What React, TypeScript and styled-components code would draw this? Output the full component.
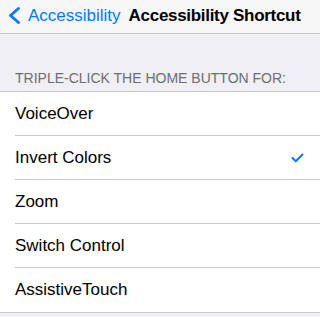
import React from 'react';
import styled, { createGlobalStyle } from 'styled-components';

const GlobalStyle = createGlobalStyle`
  html, body {
    margin: 0;
    padding: 0;
    background: #efeff4;
  }
  body {
    font-family: "Liberation Sans", Arial, sans-serif;
    -webkit-font-smoothing: antialiased;
  }
`;

const Screen = styled.div`
  width: 320px;
  height: 317px;
  overflow: hidden;
  background: #efeff4;
`;

const NavBar = styled.div`
  height: 34px;
  display: flex;
  align-items: center;
  background: #f7f7f8;
  border-bottom: 1px solid #c8c7cc;
  box-sizing: border-box;
  padding: 0 0 2px 8px;
`;

const BackButton = styled.div`
  display: flex;
  align-items: center;
  gap: 7px;
  color: #007aff;
  font-size: 17px;
`;

const Title = styled.div`
  margin-left: 8px;
  font-size: 17px;
  font-weight: bold;
  letter-spacing: -0.3px;
  color: #000;
`;

const SectionHeader = styled.div`
  padding: 36px 15px 0;
  height: 57px;
  box-sizing: border-box;
  font-size: 14px;
  color: #6d6d72;
`;

const List = styled.div`
  background: #fff;
  border-top: 1px solid #c8c7cc;
  border-bottom: 1px solid #c8c7cc;
`;

const Row = styled.div<{ $last?: boolean }>`
  height: 44px;
  margin-left: 15px;
  padding-right: 16px;
  display: flex;
  align-items: center;
  justify-content: space-between;
  box-sizing: border-box;
  border-bottom: ${p => (p.$last ? 'none' : '1px solid #c8c7cc')};
  font-size: 17px;
  color: #000;
`;

const Chevron = () => (
  <svg width="13" height="17" viewBox="0 0 13 17">
    <path d="M10.5 1.5 L2.5 8.5 L10.5 15.5" fill="none" stroke="#007aff" strokeWidth="2.8" strokeLinecap="round" strokeLinejoin="round" />
  </svg>
);

const Check = () => (
  <svg width="13" height="10" viewBox="0 0 13 10">
    <path d="M1.5 5 L4.8 8.2 L11.5 1.5" fill="none" stroke="#007aff" strokeWidth="2" strokeLinecap="round" strokeLinejoin="round" />
  </svg>
);

const items = ['VoiceOver', 'Invert Colors', 'Zoom', 'Switch Control', 'AssistiveTouch'];

export default function App() {
  return (
    <Screen>
      <GlobalStyle />
      <NavBar>
        <BackButton>
          <Chevron />
          <span>Accessibility</span>
        </BackButton>
        <Title>Accessibility Shortcut</Title>
      </NavBar>
      <SectionHeader>TRIPLE-CLICK THE HOME BUTTON FOR:</SectionHeader>
      <List>
        {items.map((label, i) => (
          <Row key={label} $last={i === items.length - 1}>
            <span>{label}</span>
            {label === 'Invert Colors' && <Check />}
          </Row>
        ))}
      </List>
    </Screen>
  );
}
